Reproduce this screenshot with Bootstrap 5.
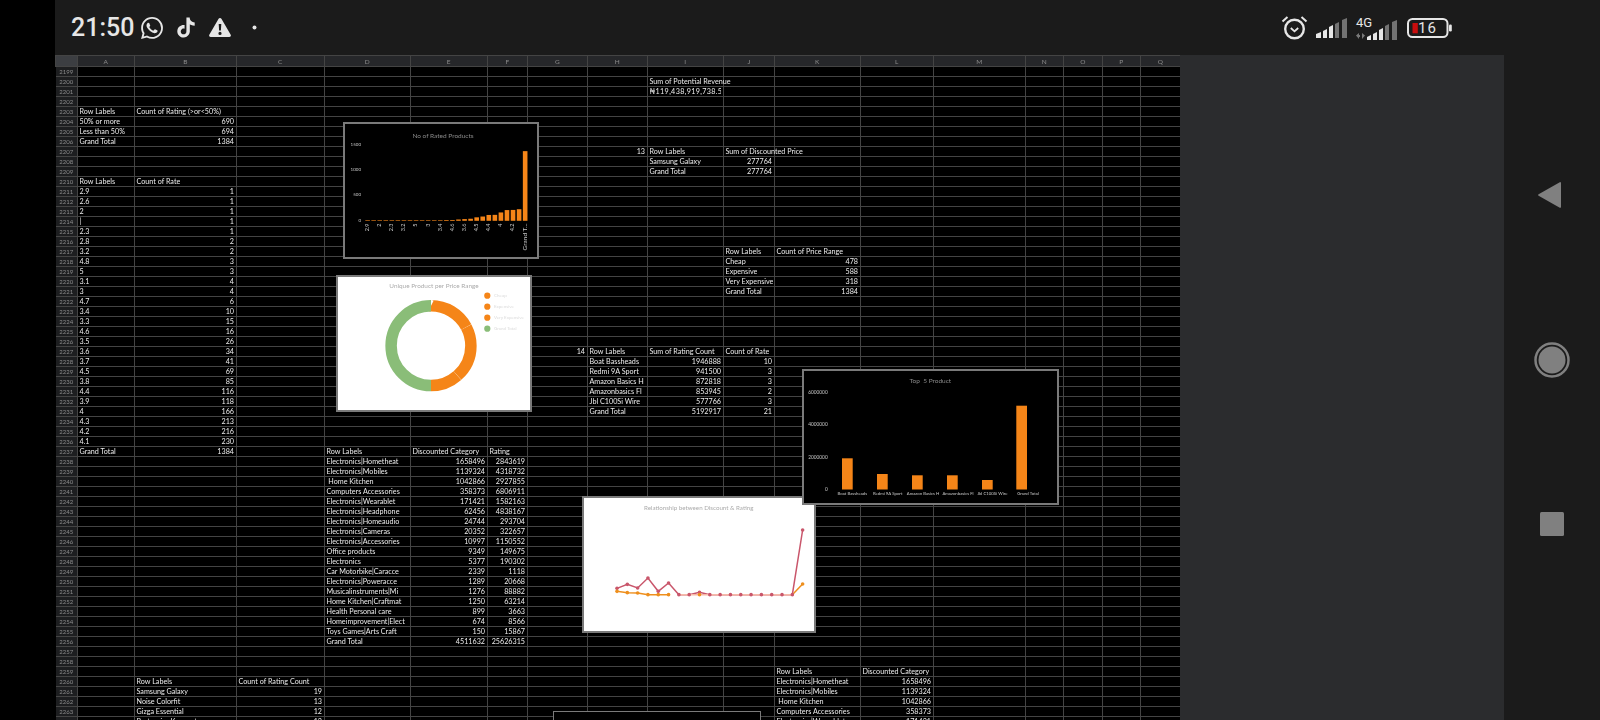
<!DOCTYPE html>
<html lang="en">
<head>
  <meta charset="UTF-8" />
  <meta name="viewport" content="width=device-width, initial-scale=1" />
  <title>Spreadsheet on phone</title>
  <link href="https://cdn.jsdelivr.net/npm/bootstrap@5.3.3/dist/css/bootstrap.min.css" rel="stylesheet" />
  <style>
    body {
      background-color: #000;
      width: 1600px;
      height: 720px;
      overflow: hidden;
    }
    .screen-main { width: 1545px; height: 720px; margin-left: 55px; }
    .status-bar {
      height: 55px;
      background-color: #1b1b1b;
      color: #e6e6e6;
      padding-left: 16px;
      padding-right: 148px;
    }
    .clock { font: 500 25px/1 Roboto, sans-serif; width: 69.5px; }
    .status-icon { fill: #e6e6e6; display: block; }
    .batt-text { font: 400 15px Roboto, sans-serif; letter-spacing: 1px; }
    .net-text { font: 400 13px Roboto, sans-serif; }
    .content-row { height: 665px; }
    .sheet-pane {
      width: 1125px;
      height: 665px;
      position: relative;
      overflow: hidden;
      background-color: #000;
      filter: blur(.3px);
    }
    .gray-fill { width: 324px; background-color: #2b2c2e; }
    .nav-pane {
      width: 96px;
      background-color: #1b1b1b;
      padding-top: 127px;
      padding-bottom: 184px;
    }
    .nav-pane svg { fill: #808080; display: block; }

    .sheet-grid {
      table-layout: fixed;
      width: 1125px;
      margin: 0;
      border-collapse: collapse;
      --bs-table-bg: transparent;
      --bs-table-color: #ececec;
      --bs-table-border-color: #444;
      font-family: Lato, "Liberation Sans", sans-serif;
      font-size: 7.2px;
    }
    .table.sheet-grid > :not(caption) > * > * {
      padding: 0 2px 0 1.5px;
      height: 10px;
      line-height: 9px;
      white-space: nowrap;
      color: #ececec;
      border: 1px solid #444;
      overflow: visible;
    }
    .table.sheet-grid > thead > tr > th {
      height: 11px;
      background-color: #26272a;
      color: #8c8c8c;
      font-weight: 400;
      font-size: 6.5px;
      text-align: center;
      border-top: 0;
    }
    .table.sheet-grid > thead > tr > th.corner { background-color: #3c3e42; }
    .table.sheet-grid > tbody > tr > th {
      background-color: #1d1e20;
      color: #8c8c8c;
      font-weight: 400;
      font-size: 6px;
      text-align: center;
      border-left: 0;
      padding: 0;
    }
    .cell-clip { display: block; overflow: hidden; letter-spacing: .35px; }

    .chart-box {
      position: absolute;
      border: 2px solid #7a7a7a;
      overflow: hidden;
      font-family: Lato, "Liberation Sans", sans-serif;
    }
    .chart-box svg { display: block; width: 100%; height: 100%; }
    .chart-dark { background-color: #000; }
    .chart-light { background-color: #fff; }
    #chartRated { left: 288px; top: 67px; width: 196px; height: 137px; }
    #chartRange { left: 281px; top: 220px; width: 196px; height: 137px; }
    #chartLine { left: 527px; top: 441px; width: 234px; height: 137px; }
    #chartTop { left: 747px; top: 314px; width: 257px; height: 136px; }
    #chartNext { left: 498px; top: 656px; width: 208px; height: 60px; border-width: 1px; }
  </style>
</head>
<body>
  <div class="screen-main d-flex flex-column">
    <!-- status bar -->
    <div class="status-bar d-flex align-items-center">
      <span class="clock">21:50</span>
      <svg class="status-icon" width="22" height="22" viewBox="0 0 24 24"><path d="M17.472 14.382c-.297-.149-1.758-.867-2.03-.967-.273-.099-.471-.148-.67.15-.197.297-.767.966-.94 1.164-.173.199-.347.223-.644.075-.297-.15-1.255-.463-2.39-1.475-.883-.788-1.48-1.761-1.653-2.059-.173-.297-.018-.458.13-.606.134-.133.298-.347.446-.52.149-.174.198-.298.298-.497.099-.198.05-.371-.025-.52-.075-.149-.669-1.612-.916-2.207-.242-.579-.487-.5-.669-.51-.173-.008-.371-.01-.57-.01-.198 0-.52.074-.792.372-.272.297-1.04 1.016-1.04 2.479 0 1.462 1.065 2.875 1.213 3.074.149.198 2.096 3.2 5.077 4.487.709.306 1.262.489 1.694.625.712.227 1.36.195 1.871.118.571-.085 1.758-.719 2.006-1.413.248-.694.248-1.289.173-1.413-.074-.124-.272-.198-.57-.347m-5.421 7.403h-.004a9.87 9.87 0 01-5.031-1.378l-.361-.214-3.741.982.998-3.648-.235-.374a9.86 9.86 0 01-1.51-5.26c.001-5.45 4.436-9.884 9.888-9.884 2.64 0 5.122 1.03 6.988 2.898a9.825 9.825 0 012.893 6.994c-.003 5.45-4.437 9.884-9.885 9.884m8.413-18.297A11.815 11.815 0 0012.05 0C5.495 0 .16 5.335.157 11.892c0 2.096.547 4.142 1.588 5.945L.057 24l6.305-1.654a11.882 11.882 0 005.683 1.448h.005c6.554 0 11.89-5.335 11.893-11.893a11.821 11.821 0 00-3.48-8.413z"/></svg>
      <svg class="status-icon" width="20" height="21" viewBox="0 0 24 24" style="margin-left:13px"><path d="M12.525.02c1.31-.02 2.61-.01 3.91-.02.08 1.53.63 3.09 1.75 4.17 1.12 1.11 2.7 1.62 4.24 1.79v4.03c-1.44-.05-2.89-.35-4.2-.97-.57-.26-1.1-.59-1.62-.93-.01 2.92.01 5.84-.02 8.75-.08 1.4-.54 2.79-1.35 3.94-1.31 1.92-3.58 3.17-5.91 3.21-1.43.08-2.86-.31-4.08-1.03-2.02-1.19-3.44-3.37-3.65-5.71-.02-.5-.03-1-.01-1.49.18-1.9 1.12-3.72 2.58-4.96 1.66-1.44 3.98-2.13 6.15-1.72.02 1.48-.04 2.96-.04 4.44-.99-.32-2.15-.23-3.02.37-.63.41-1.11 1.04-1.36 1.75-.21.51-.15 1.07-.14 1.61.24 1.64 1.82 3.02 3.5 2.87 1.12-.01 2.19-.66 2.77-1.61.19-.33.4-.67.41-1.06.1-1.79.06-3.57.07-5.36.01-4.03-.01-8.05.02-12.07z"/></svg>
      <svg class="status-icon" width="22" height="19" viewBox="0 0 22 19" style="margin-left:13px"><path fill-rule="evenodd" d="M11 0c.6 0 1.1.3 1.4.8l9.3 16c.6 1-.1 2.2-1.3 2.2H1.6C.4 19-.3 17.800.3 16.800l9.300-16C9.900.3 10.400 0 11 0zM9.700 6l.4 6.500h1.800l.4-6.500zM11 13.800a1.600 1.600 0 100 3.200 1.600 1.600 0 000-3.200z"/></svg>
      <svg class="status-icon" width="5" height="5" viewBox="0 0 5 5" style="margin-left:21px"><circle cx="2.500" cy="2.500" r="2"/></svg>
      <div class="d-flex align-items-center ms-auto">
        <svg width="27" height="25" viewBox="0 0 27 25"><g fill="none" stroke="#e6e6e6"><circle cx="13.500" cy="14" r="9.300" stroke-width="2.400"/><path d="M9.800 13l3.700 3.300 3.700-3.300" stroke-width="1.800"/><path d="M1.500 6.500L6.500 2M25.500 6.500L20.500 2" stroke-width="2"/></g></svg>
        <svg class="ms-2" width="32" height="20" viewBox="0 0 32 20"><path fill="#e6e6e6" d="M0 16l5-2v6H0zM7 13l4-2v9H7zM13 9l4-2v13h-4z"/><path fill="#737373" d="M19 6l4-2v16h-4zM26 2l5-2v20h-5z"/></svg>
        <div class="position-relative" style="width:41px;height:24px;margin-left:8px">
          <span class="net-text position-absolute top-0 start-0 lh-1">4G</span>
          <svg class="position-absolute bottom-0 start-0" width="41" height="20" viewBox="0 0 41 20"><path fill="#777" d="M0 15.500l3-2.500v2h1v2H3v2zM9 15.500l-3-2.500v6zM7 15h0z"/><path fill="#e6e6e6" d="M11 17l4-2v5h-4zM17 14l4-2v8h-4zM23 10l4-2v12h-4z"/><path fill="#737373" d="M29 6l4-2v16h-4zM36 2l5-2v20h-5z"/></svg>
        </div>
        <div class="position-relative" style="width:45px;height:20px;margin-left:10px">
          <svg class="position-absolute top-0 start-0" width="45" height="20" viewBox="0 0 45 20"><rect x="1" y="1" width="39.500" height="18" rx="4.500" fill="none" stroke="#e6e6e6" stroke-width="2"/><rect x="5.500" y="5" width="5.300" height="10.300" fill="#c80d0d"/><rect x="42" y="6.500" width="2.800" height="7" rx="1.200" fill="#e6e6e6"/></svg>
          <span class="batt-text position-absolute lh-1" style="left:11px;top:3px">16</span>
        </div>
      </div>
    </div>

    <div class="content-row d-flex">
      <!-- sheet -->
      <div class="sheet-pane">
        <table class="table table-bordered sheet-grid" id="grid"></table>
        <div class="chart-box chart-dark" id="chartRated"></div>
        <div class="chart-box chart-light" id="chartRange"></div>
        <div class="chart-box chart-light" id="chartLine"></div>
        <div class="chart-box chart-dark" id="chartTop"></div>
        <div class="chart-box chart-dark" id="chartNext"></div>
      </div>
      <div class="gray-fill"></div>
      <!-- android nav buttons -->
      <div class="nav-pane d-flex flex-column align-items-center justify-content-between">
        <svg width="24" height="26" viewBox="0 0 24 26" style="margin-left:-4px"><path d="M.6 12.200L21.800.2c.5-.3 1.200.1 1.200.7v24.200c0 .6-.7 1-1.200.7L.6 13.800c-.6-.3-.6-1.300 0-1.600z"/></svg>
        <svg width="36" height="36" viewBox="0 0 36 36"><circle cx="18" cy="18" r="16.500" fill="none" stroke="#808080" stroke-width="2.500"/><circle cx="18" cy="18" r="13.500"/></svg>
        <svg width="24" height="24" viewBox="0 0 24 24"><rect width="24" height="24" rx="1.500"/></svg>
      </div>
    </div>
  </div>

  <script src="https://cdn.jsdelivr.net/npm/bootstrap@5.3.3/dist/js/bootstrap.bundle.min.js"></script>
  <script>
    const COLS = 'ABCDEFGHIJKLMNOPQ'.split('');
    const WIDTHS = [22, 57, 102, 88, 86, 77, 40, 60, 60, 76, 51, 86, 73, 92, 38, 39, 38, 40];

    // [row, first column, values...] - numbers go right aligned like in excel
    const BLOCKS = [
      [2200, 'I', 'Sum of Potential Revenue'],
      [2203, 'A', 'Row Labels', 'Count of Rating (>or<50%)'],
      [2204, 'A', '50% or more', 690],
      [2205, 'A', 'Less than 50%', 694],
      [2206, 'A', 'Grand Total', 1384],
      [2207, 'H', 13, 'Row Labels', 'Sum of Discounted Price'],
      [2208, 'I', 'Samsung Galaxy', 277764],
      [2209, 'I', 'Grand Total', 277764],
      [2210, 'A', 'Row Labels', 'Count of Rate'],
      [2217, 'J', 'Row Labels', 'Count of Price Range'],
      [2218, 'J', 'Cheap', 478],
      [2219, 'J', 'Expensive', 588],
      [2220, 'J', 'Very Expensive', 318],
      [2221, 'J', 'Grand Total', 1384],
      [2227, 'G', 14, 'Row Labels', 'Sum of Rating Count', 'Count of Rate'],
      [2228, 'H', 'Boat Bassheads', 1946888, 10],
      [2229, 'H', 'Redmi 9A Sport', 941500, 3],
      [2230, 'H', 'Amazon Basics H', 872818, 3],
      [2231, 'H', 'Amazonbasics Fl', 853945, 2],
      [2232, 'H', 'Jbl C100Si Wire', 577766, 3],
      [2233, 'H', 'Grand Total', 5192917, 21],
      [2237, 'D', 'Row Labels', 'Discounted Category', 'Rating'],
      [2260, 'B', 'Row Labels', 'Count of Rating Count'],
      [2261, 'B', 'Samsung Galaxy', 19],
      [2262, 'B', 'Noise Colorfit', 13],
      [2263, 'B', 'Gizga Essential', 12],
      [2264, 'B', 'Portronics Konnect', 12],
      [2259, 'K', 'Row Labels', 'Discounted Category'],
      [2260, 'K', 'Electronics|Hometheat', 1658496],
      [2261, 'K', 'Electronics|Mobiles', 1139324],
      [2262, 'K', '\u00a0Home Kitchen', 1042866],
      [2263, 'K', 'Computers Accessories', 358373],
      [2264, 'K', 'Electronics|Wearablet', 171421]
    ];
    const RATES = [['2.9',1],['2.6',1],['2',1],['|',1],['2.3',1],['2.8',2],['3.2',2],['4.8',3],['5',3],['3.1',4],['3',4],['4.7',6],['3.4',10],['3.3',15],['4.6',16],['3.5',26],['3.6',34],['3.7',41],['4.5',69],['3.8',85],['4.4',116],['3.9',118],['4',166],['4.3',213],['4.2',216],['4.1',230]];
    const CATEGORIES = [['Electronics|Hometheat',1658496,2843619],['Electronics|Mobiles',1139324,4318732],['\u00a0Home Kitchen',1042866,2927855],['Computers Accessories',358373,6806911],['Electronics|Wearablet',171421,1582163],['Electronics|Headphone',62456,4838167],['Electronics|Homeaudio',24744,293704],['Electronics|Cameras',20352,322657],['Electronics|Accessories',10997,1150552],['Office products',9349,149675],['Electronics',5377,190302],['Car Motorbike|Caracce',2339,1118],['Electronics|Poweracce',1289,20668],['Musicalinstruments|Mi',1276,88882],['Home Kitchen|Craftmat',1250,63214],['Health Personal care',899,3663],['Homeimprovement|Elect',674,8566],['Toys Games|Arts Craft',150,15867],['Grand Total',4511632,25626315]];
    RATES.forEach((r, i) => BLOCKS.push([2211 + i, 'A', r[0], r[1]]));
    BLOCKS.push([2237, 'A', 'Grand Total', 1384]);
    CATEGORIES.forEach((c, i) => BLOCKS.push([2238 + i, 'D', c[0], c[1], c[2]]));

    function buildGrid() {
      const cells = {};
      BLOCKS.forEach(([row, col, ...vals]) => {
        vals.forEach((v, i) => {
          cells[row + COLS[COLS.indexOf(col) + i]] = v;
        });
      });
      let html = '<colgroup>' + WIDTHS.map(w => `<col style="width:${w}px">`).join('') + '</colgroup>';
      html += '<thead><tr><th class="corner"></th>' + COLS.map(c => `<th>${c}</th>`).join('') + '</tr></thead><tbody>';
      for (let r = 2199; r <= 2264; r++) {
        html += `<tr><th>${r}</th>`;
        COLS.forEach(c => {
          const v = cells[r + c];
          if (r === 2201 && c === 'I') {
            html += '<td><span class="cell-clip">\u20a6119,438,919,738.58</span></td>';
          } else if (v === undefined) {
            html += '<td></td>';
          } else if (typeof v === 'number') {
            html += `<td class="text-end">${v}</td>`;
          } else {
            html += `<td>${v.replace('<', '&lt;')}</td>`;
          }
        });
        html += '</tr>';
      }
      document.getElementById('grid').innerHTML = html + '</tbody>';
    }

    // the charts are drawn in screen coordinates, viewBox moves them into the box
    function svg(id, box, body) {
      document.getElementById(id).innerHTML = `<svg viewBox="${box}" preserveAspectRatio="none">${body}</svg>`;
    }
    const text = (x, y, s, size, fill, anchor = 'middle', extra = '') =>
      `<text x="${x}" y="${y}" font-size="${size}" fill="${fill}" text-anchor="${anchor}" dominant-baseline="middle" ${extra}>${s}</text>`;

    function chartRated() {
      const values = RATES.map(r => r[1]).concat(1384);
      const labels = RATES.map(r => r[0]).concat('Grand T...');
      let b = text(443, 136, 'No of Rated Products', 6.5, '#8a8a8a');
      [[1500, 145], [1000, 170], [500, 195], [0, 220.5]].forEach(([v, y]) => {
        b += text(361, y, v, 4.5, '#c8c8c8', 'end');
      });
      values.forEach((v, i) => {
        const x = 365.3 + i * 6.06;
        const h = Math.max(v / 1500 * 75.5, .6);
        b += `<rect x="${x}" y="${220.8 - h}" width="4.600" height="${h}" fill="#f58518"/>`;
        if (i % 2 === 0) {
          const lx = x + 2.3;
          const size = i === 26 ? 6.5 : 5.5;
          b += text(lx, 223.5, labels[i], size, '#c8c8c8', 'end', `transform="rotate(-90 ${lx} 223.5)"`);
        }
      });
      svg('chartRated', '345 124 192 133', b);
    }

    function chartRange() {
      let b = text(434, 286, 'Unique Product per Price Range', 6.4, '#ababab');
      const parts = [[478, '#f58518', 1.5], [588, '#f58518', 1.5], [318, '#f58518', 0], [1384, '#8abd78', 0]];
      let start = 0;
      parts.forEach(([v, color, gap]) => {
        b += `<circle cx="431" cy="345.700" r="39.900" fill="none" stroke="${color}" stroke-width="11.500" pathLength="2768" stroke-dasharray="${v - gap} ${2768 - v + gap}" stroke-dashoffset="${-start}" transform="rotate(-90 431 345.700)"/>`;
        start += v;
      });
      ['Cheap', 'Expensive', 'Very Expensive', 'Grand Total'].forEach((s, i) => {
        const y = 295.700 + i * 11;
        b += `<circle cx="487.300" cy="${y}" r="3.100" fill="${i === 3 ? '#8abd78' : '#f58518'}"/>`;
        b += text(494, y, s, 4.500, '#dcdcdc', 'start');
      });
      svg('chartRange', '338 277 192 133', b);
    }

    function chartLine() {
      const red = [295,283,294,264,304,279,314,314,307,314,314,314,314,314,314,314,314,314,120];
      const orange = [304,308,309,314,314,314,314,314,314,314,314,314,314,314,314,314,314,314,282];
      const px = i => 570 + (141 + i * 30.94) / 3;
      const py = v => 490 + v / 3;
      const pts = vals => vals.map((v, i) => `${px(i)},${py(v)}`).join(' ');
      const dots = (vals, color, skip) => vals.map((v, i) =>
        skip(i) ? '' : `<circle cx="${px(i)}" cy="${py(v)}" r="1.800" fill="${color}"/>`).join('');
      let b = text(698.700, 508, 'Relationship between Discount &amp; Rating', 6.200, '#ababab');
      b += `<polyline points="${pts(red)}" fill="none" stroke="#c9566b" stroke-width="1.500"/>`;
      b += `<polyline points="${pts(orange.slice(0, 6))}" fill="none" stroke="#ee8f1d" stroke-width="1.500"/>`;
      b += `<polyline points="${px(6)},${py(314)} ${px(17)},${py(314)}" fill="none" stroke="#f6b9a8" stroke-width="1.500"/>`;
      b += `<polyline points="${px(17)},${py(314)} ${px(18)},${py(282)}" fill="none" stroke="#ee8f1d" stroke-width="1.500"/>`;
      b += dots(red, '#c9566b', () => false);
      b += dots(orange, '#ee8f1d', i => i > 5 && i !== 8 && i !== 18);
      svg('chartLine', '584 498 230 133', b);
    }

    function chartTop() {
      let b = text(930.300, 381, 'Top&#160;&#160;5 Product', 6.500, '#8a8a8a');
      [[6000000, 392.3], [4000000, 424.3], [2000000, 457.3], [0, 489.3]].forEach(([v, y]) => {
        b += text(827.700, y, v, 4.800, '#c8c8c8', 'end');
      });
      const bars = [[842, 458.300, 'Boat Bassheads', 852.300], [877, 474, 'Redmi 9A Sport', 887.700], [912, 475.300, 'Amazon Basics H', 923], [947, 475.300, 'Amazonbasics Fl', 958], [982, 480, 'Jbl C100Si Wire', 992.300], [1016.300, 405.700, 'Grand Total', 1028]];
      bars.forEach(([x, top, label, lx]) => {
        b += `<rect x="${x}" y="${top}" width="10.700" height="${489.500 - top}" fill="#f58518"/>`;
        b += text(lx, 494.300, label, 4.300, '#c8c8c8');
      });
      svg('chartTop', '804 371 253 132', b);
    }

    buildGrid();
    chartRated();
    chartRange();
    chartLine();
    chartTop();
  </script>
</body>
</html>
